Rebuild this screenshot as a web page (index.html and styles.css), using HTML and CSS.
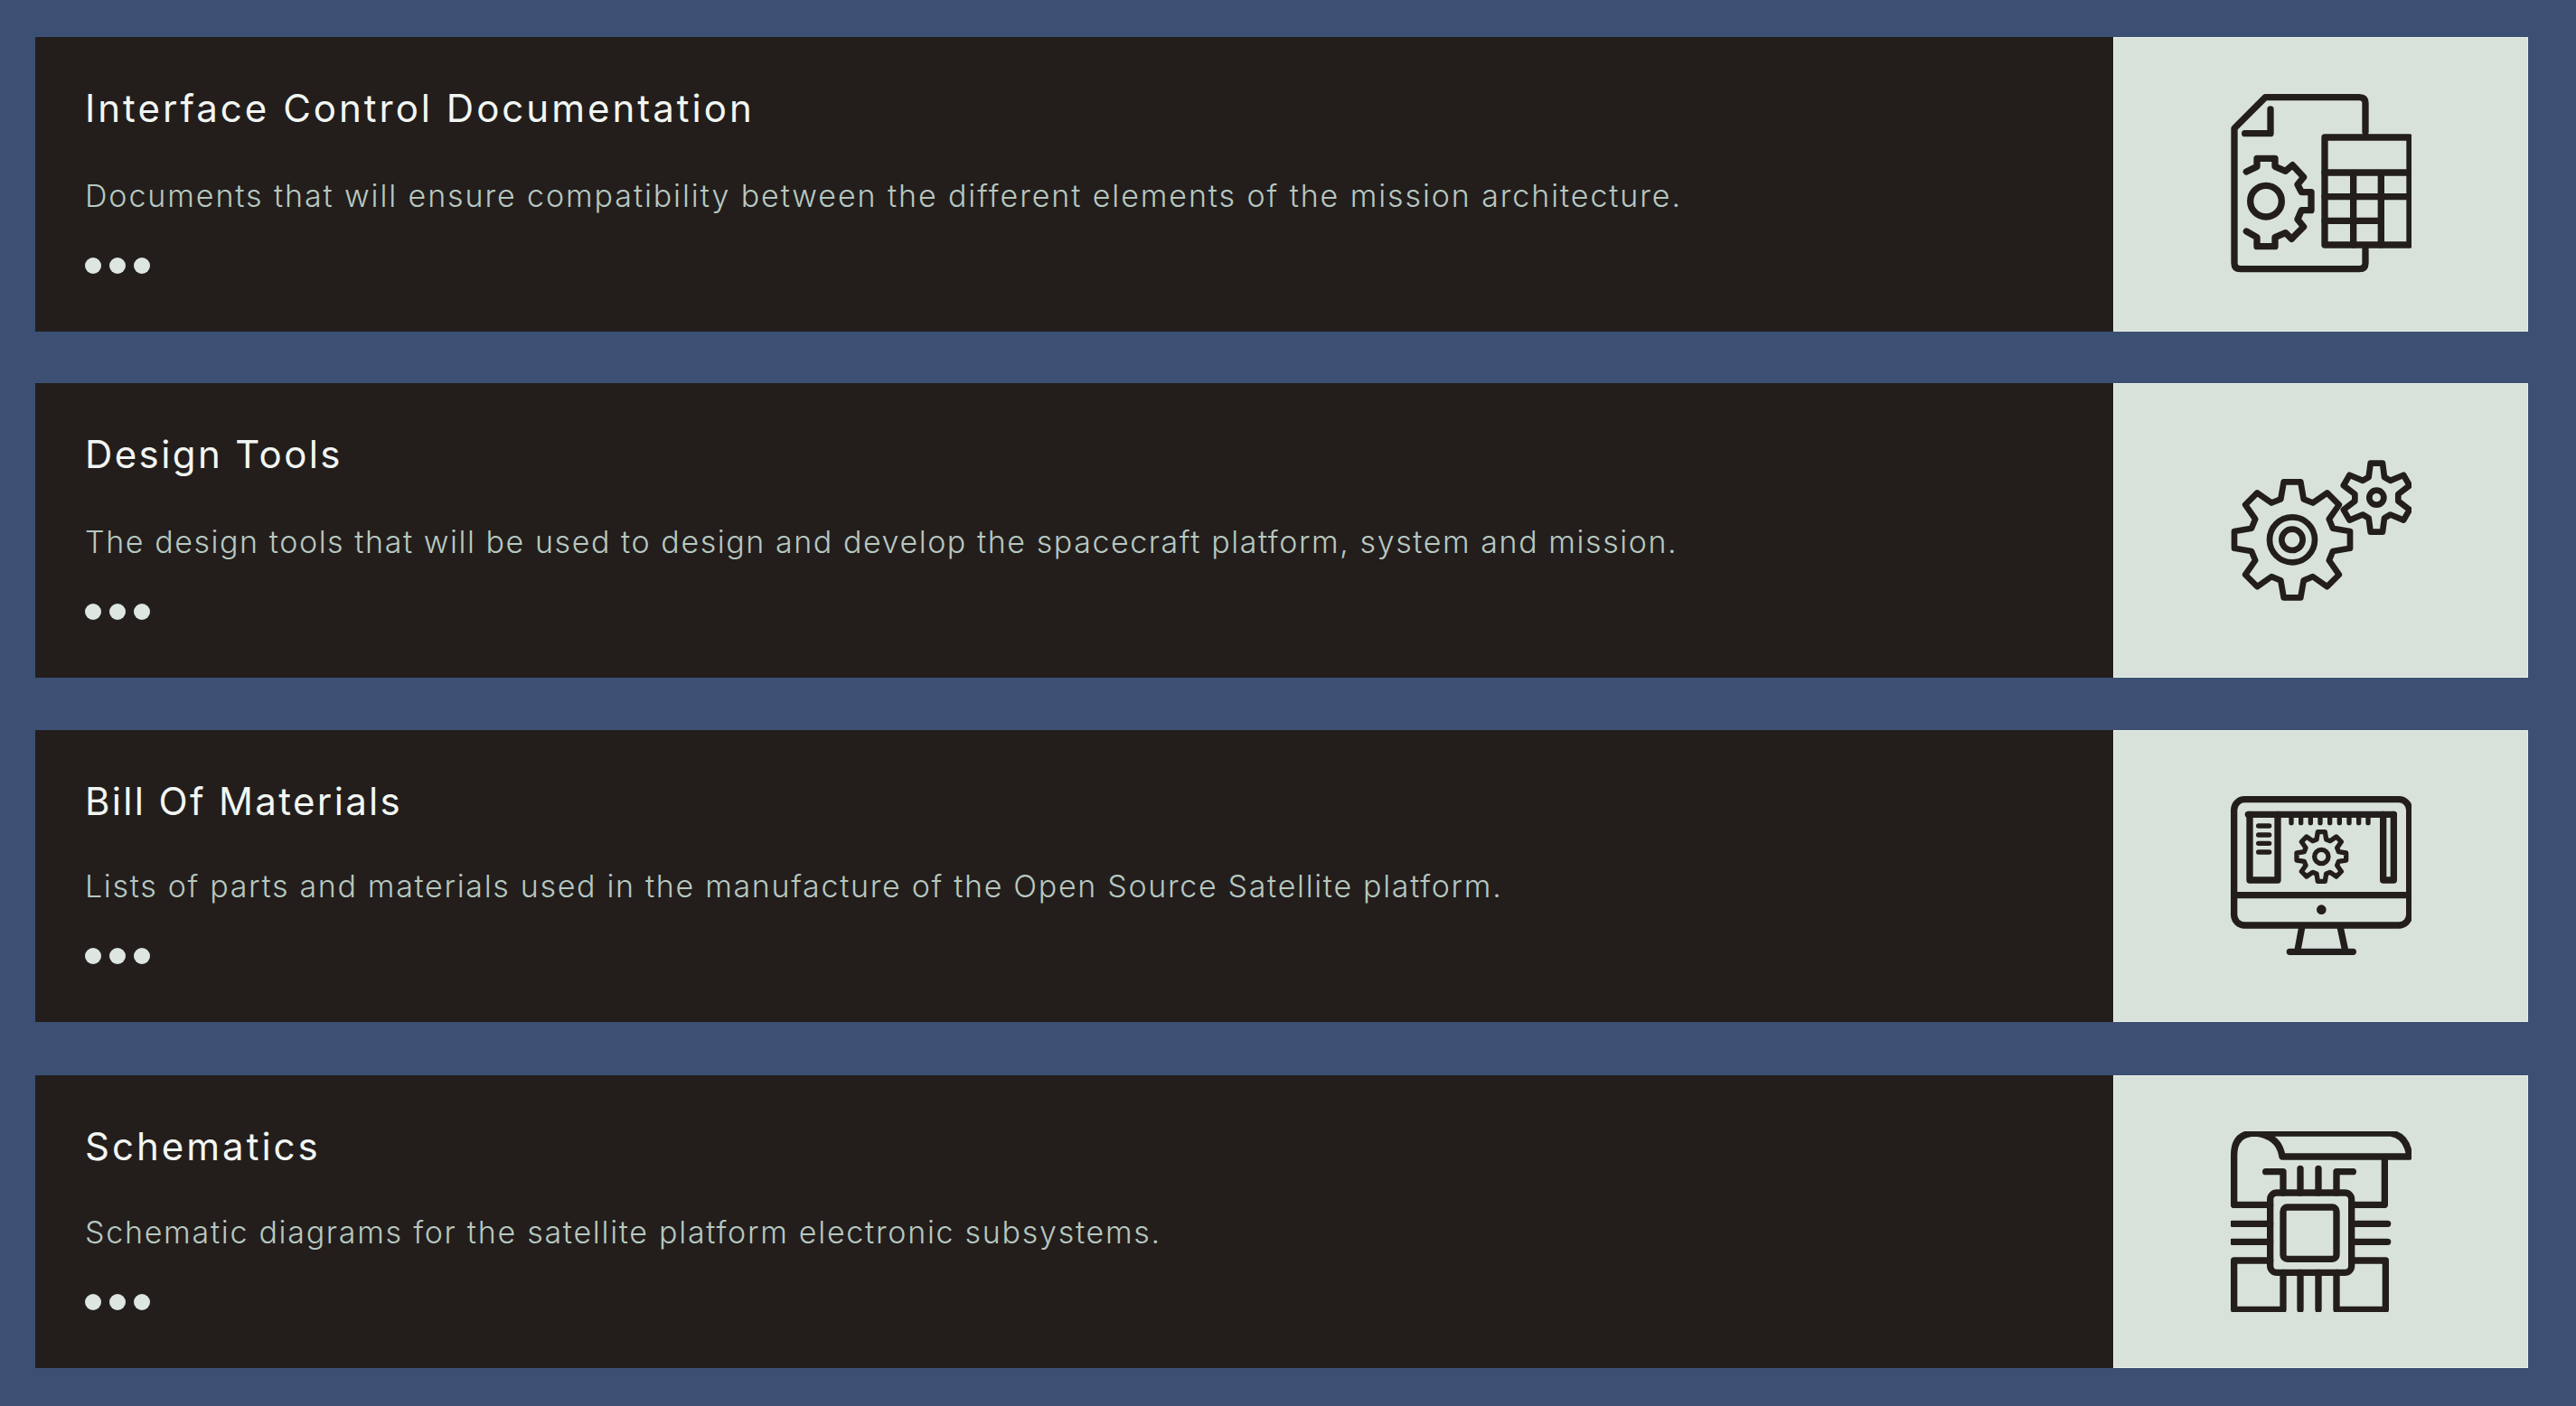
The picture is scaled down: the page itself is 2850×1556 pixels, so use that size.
FILE: index.html
```html
<!DOCTYPE html>
<html lang="en">
<head>
<meta charset="utf-8">
<title>Documentation</title>
<link rel="stylesheet" href="styles.css">
</head>
<body>
<main class="list">
  <article class="card">
    <div class="copy">
      <h2 class="title">Interface Control Documentation</h2>
      <p class="desc">Documents that will ensure compatibility between the different elements of the mission architecture.</p>
      <div class="dots"><span></span><span></span><span></span></div>
    </div>
    <div class="panel">
      <svg class="icon" viewBox="203 104 600 600" aria-hidden="true">
        <path d="M650 230V135Q650 115 630 115H318L215 218V665Q215 685 235 685H630Q650 685 650 665V620"/>
        <path d="M335 155V235H250"/>
        <circle cx="320" cy="460" r="52"/>
        <path d="M255 362L290 345V318H350V345L385 360L408 340L445 380L425 405L438 430H470V490H438L425 520L445 545L405 585L385 565L350 580V610H290V580L255 560"/>
        <rect x="515" y="248" width="282" height="357"/>
        <path d="M515 365H797M515 445H797M515 525H702M610 365V605M702 365V605"/>
      </svg>
    </div>
  </article>
  <article class="card card-second">
    <div class="copy">
      <h2 class="title">Design Tools</h2>
      <p class="desc">The design tools that will be used to design and develop the spacecraft platform, system and mission.</p>
      <div class="dots"><span></span><span></span><span></span></div>
    </div>
    <div class="panel">
      <svg class="icon thin" viewBox="204 21 600 600" aria-hidden="true">
        <path d="M370 217L380 160H436L446 217L476.6 229.6L524 196.4L563.6 236L530.4 283.4L543 314L600 324V380L543 390L530.4 420.6L563.6 468L524 507.6L476.6 474.4L446 487L436 544H380L370 487L339.4 474.4L292 507.6L252.4 468L285.6 420.6L273 390L216 380V324L273 314L285.6 283.4L252.4 236L292 196.4L339.4 229.6Z"/>
        <circle cx="408" cy="352" r="75"/>
        <circle cx="408" cy="352" r="35"/>
        <path d="M662 144L668 98H708L714 144L733.9 155.5L777.6 137.2L797.6 171.8L759.9 200.5V223.5L797.6 252.2L777.6 286.8L733.9 268.5L714 280L708 326H668L662 280L642.1 268.5L598.4 286.8L578.4 252.2L616.1 223.5V200.5L578.4 171.8L598.4 137.2L642.1 155.5Z"/>
        <circle cx="688" cy="212" r="24"/>
      </svg>
    </div>
  </article>
  <article class="card card-third">
    <div class="copy">
      <h2 class="title">Bill Of Materials</h2>
      <p class="desc">Lists of parts and materials used in the manufacture of the Open Source Satellite platform.</p>
      <div class="dots"><span></span><span></span><span></span></div>
    </div>
    <div class="panel">
      <svg class="icon" viewBox="204 28 600 600" aria-hidden="true">
        <rect x="215" y="72" width="582" height="418" rx="35"/>
        <path d="M215 390H797"/>
        <circle class="solid" cx="505" cy="438" r="12"/>
        <path d="M440 498L425 578M568 498L585 578M400 578H610"/>
        <path d="M262 122H745"/>
        <path d="M267 122V340H360V122M710 122V340H745V122"/>
        <path class="fine" d="M405 125V150M437 125V150M469 125V150M501 125V150M533 125V150M565 125V150M597 125V150M629 125V150M660 125V150"/>
        <path class="fine" d="M296 160H332M296 190H332M296 218H332M296 247H332"/>
        <path class="fine" d="M489 205L493 180H517L521 205L534.2 210L554.3 195.9L571.1 212.7L557 232.8L562 246L587 250V274L562 278L557 291.2L571.1 311.3L554.3 328.1L534.2 314L521 319L517 344H493L489 319L475.8 314L455.7 328.1L438.9 311.3L453 291.2L448 278L423 274V250L448 246L453 232.8L438.9 212.7L455.7 195.9L475.8 210Z"/>
        <circle class="fine" cx="505" cy="262" r="23"/>
      </svg>
    </div>
  </article>
  <article class="card card-fourth">
    <div class="copy">
      <h2 class="title">Schematics</h2>
      <p class="desc">Schematic diagrams for the satellite platform electronic subsystems.</p>
      <div class="dots"><span></span><span></span><span></span></div>
    </div>
    <div class="panel">
      <svg class="icon" viewBox="204 66 600 600" aria-hidden="true">
        <path d="M215 310V145Q215 72 285 72H735Q790 80 797 150H375Q365 80 285 72"/>
        <path d="M715 155V310H605M215 310H335"/>
        <rect x="335" y="270" width="270" height="265" rx="22"/>
        <rect x="378" y="318" width="177" height="172" rx="14"/>
        <path d="M320 200H378V270M435 190V270M495 190V270M610 200H555V270"/>
        <path d="M210 373H335M210 433H335M605 373H725M605 433H725"/>
        <path d="M335 495H215V658H378V535M605 495H718V658H555V535M435 535V658M495 535V658"/>
      </svg>
    </div>
  </article>
</main>
</body>
</html>
```
FILE: styles.css
```css
* { box-sizing: border-box; }
html, body { margin: 0; }
body {
  width: 2850px;
  height: 1556px;
  background: #3c5074;
  font-family: Inter, "Open Sans", sans-serif;
  overflow: hidden;
}
.list {
  display: flex;
  flex-direction: column;
  gap: 57px;
  padding: 41px 53px 0 39px;
}
.card {
  display: flex;
  height: 326px;
  background: #231e1c;
}
.card-second .title { letter-spacing: 2.4px; }
.card-second .desc { letter-spacing: 1.56px; }
.card-third {
  height: 323px;
  margin-top: 1px;
}
.card-third .title { letter-spacing: 2.35px; }
.card-third .desc {
  margin-top: 47px;
  letter-spacing: 1.68px;
}
.card-fourth {
  height: 324px;
  margin-top: 2px;
}
.card-fourth .desc {
  margin-top: 48px;
  letter-spacing: 1.72px;
}
.copy {
  flex: 1;
  min-width: 0;
  padding: 54px 0 0 55px;
}
.title {
  margin: 0;
  font-size: 42px;
  line-height: 50px;
  font-weight: 400;
  color: #f2f6f2;
  letter-spacing: 3px;
}
.desc {
  margin: 50px 0 0;
  font-size: 34px;
  line-height: 44px;
  font-weight: 300;
  color: #b7c8c1;
  letter-spacing: 1.9px;
  white-space: nowrap;
}
.dots {
  display: flex;
  gap: 9px;
  margin-top: 46px;
}
.dots span {
  width: 18px;
  height: 18px;
  border-radius: 50%;
  background: #dde6e0;
}
.panel {
  flex: none;
  width: 459px;
  display: flex;
  align-items: center;
  justify-content: center;
  background: #d8e2db;
  border: 1px solid #e8eee2;
}
.icon {
  width: 200px;
  height: 200px;
  fill: none;
  stroke: #231e1c;
  stroke-width: 22;
  stroke-linecap: round;
  stroke-linejoin: round;
}
.icon.thin { stroke-width: 20; }
.icon .fine { stroke-width: 16; }
.icon .solid { fill: #231e1c; stroke-width: 8; }
```
